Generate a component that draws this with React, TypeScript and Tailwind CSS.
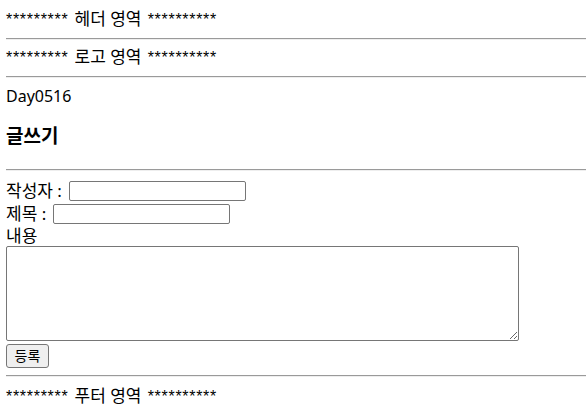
import React from "react";

const font = { fontFamily: '"Noto Sans", "Noto Sans CJK KR", sans-serif' };

function Rule({ className = "" }: { className?: string }) {
  return <div className={`h-[2px] border-t border-b border-t-[#9a9a9a] border-b-[#eeeeee] ${className}`} />;
}

// the star runs in the reference are narrow (about 6.7px per star)
function Stars({ n }: { n: number }) {
  return (
    <span className="text-[16px] tracking-[0.7px]" style={{ fontFamily: '"Liberation Sans", sans-serif' }}>
      {"*".repeat(n)}
    </span>
  );
}

function Banner({ label, className = "" }: { label: string; className?: string }) {
  return (
    <div className={`h-[21px] leading-[21px] whitespace-nowrap ${className}`}>
      <Stars n={9} /> <span className="px-[2px] text-[17px]">{label}</span> <Stars n={10} />
    </div>
  );
}

export default function App() {
  return (
    <div
      className="min-h-[409px] bg-white pl-[6px] pt-[8px] text-[16px] text-black"
      style={font}
    >
      <Banner label="헤더 영역" />
      <Rule className="mt-[9px]" />

      <Banner label="로고 영역" className="mt-[6px]" />
      <Rule className="mt-[9px]" />

      {/* body */}
      <div className="mt-[8px] h-[21px] leading-[21px]">Day0516</div>
      <h3 className="mt-[17px] h-[24px] text-[19px] font-bold leading-[24px]">글쓰기</h3>
      <Rule className="mt-[21px]" />

      <form className="flex flex-col text-[17px]" onSubmit={(e) => e.preventDefault()}>
        <div className="mt-[10px] flex h-[20px] items-center">
          <span className="w-[63px] whitespace-nowrap leading-[20px]">작성자 :</span>
          <input
            type="text"
            className="h-[20px] w-[177px] rounded-[2px] border border-[#767676] bg-white px-[2px] text-[13px]"
          />
        </div>
        <div className="mt-[3px] flex h-[20px] items-center">
          <span className="w-[47px] whitespace-nowrap leading-[20px]">제목 :</span>
          <input
            type="text"
            className="h-[20px] w-[177px] rounded-[2px] border border-[#767676] bg-white px-[2px] text-[13px]"
          />
        </div>
        <div className="mt-[2px] h-[20px] leading-[20px]">내용</div>
        <textarea className="block h-[95px] w-[513px] rounded-[2px] border border-[#767676] bg-white p-[2px] text-[13px]" />
        <div className="mt-[1px]">
          <button
            type="submit"
            className="h-[24px] w-[43px] rounded-[3px] border border-[#767676] bg-[#efefef] text-[14px] leading-[20px]"
          >
            등록
          </button>
        </div>
      </form>
      <Rule className="mt-[7px]" />

      <Banner label="푸터 영역" className="mt-[8px]" />
    </div>
  );
}
